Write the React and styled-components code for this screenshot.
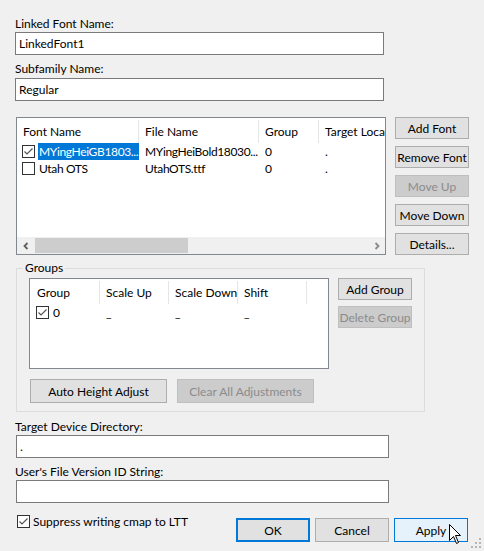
import React from "react";
import styled, { createGlobalStyle } from "styled-components";

const GlobalStyle = createGlobalStyle`
	html, body {
		margin: 0;
		padding: 0;
		background: #f0f0f0;
	}
	body {
		font-family: Lato, "Noto Sans", sans-serif;
		font-size: 12px;
		color: #000;
	}
`;

/*    **********************************************     */
const Dialog = styled.div`
	position: relative;
	box-sizing: border-box;
	width: 484px;
	height: 551px;
	padding: 16px 0 0 15px;
	background: #f0f0f0;
	overflow: hidden;
`;

const Label = styled.div`
	height: 16px;
	line-height: 16px;
	margin-top: ${(p) => p.$top || 0}px;
	white-space: nowrap;
`;

const TextBox = styled.div`
	box-sizing: border-box;
	display: flex;
	align-items: center;
	width: ${(p) => p.$w}px;
	height: 23px;
	margin-top: ${(p) => p.$top || 0}px;
	margin-left: ${(p) => p.$left || 0}px;
	padding: 0 3px;
	border: 1px solid #7a7a7a;
	background: #fff;
`;

const FontSection = styled.div`
	display: flex;
	gap: 9px;
	margin-top: 16px;
	margin-left: 1px;
`;

const ButtonColumn = styled.div`
	display: flex;
	flex-direction: column;
	gap: ${(p) => p.$gap || 7}px;
`;

const Button = styled.button`
	box-sizing: border-box;
	width: ${(p) => p.$w || 74}px;
	height: ${(p) => p.$h || 22}px;
	padding: 0;
	font-family: inherit;
	font-size: 12px;
	color: #000;
	background: #e1e1e1;
	border: 1px solid #adadad;
	border-radius: 0;
	white-space: nowrap;

	&:disabled {
		color: #8b8b8b;
		background: #cccccc;
		border-color: #bfbfbf;
	}
`;

const DefaultButton = styled(Button)`
	border: 2px solid #0078d7;
`;

const HotButton = styled(Button)`
	background: #e5f1fb;
	border-color: #0078d7;
`;

const ListView = styled.div`
	box-sizing: border-box;
	display: flex;
	flex-direction: column;
	width: ${(p) => p.$w}px;
	height: ${(p) => p.$h}px;
	border: 1px solid #828790;
	background: #fff;
	overflow: hidden;
`;

const HeaderRow = styled.div`
	display: grid;
	grid-template-columns: ${(p) => p.$cols};
	height: ${(p) => p.$h || 25}px;
	flex-shrink: 0;
`;

const HeaderCell = styled.div`
	display: flex;
	align-items: center;
	margin: 2px 0 0;
	padding-left: ${(p) => p.$pad || 6}px;
	border-right: 1px solid #e5e5e5;
	white-space: nowrap;
	overflow: hidden;

	&:last-child {
		border-right: ${(p) => (p.$edge ? "1px solid #e5e5e5" : "none")};
	}
`;

const Row = styled.div`
	display: grid;
	grid-template-columns: ${(p) => p.$cols};
	height: 17px;
	line-height: 17px;
	letter-spacing: -0.35px;
	flex-shrink: 0;
`;

const Cell = styled.div`
	display: flex;
	align-items: center;
	padding-left: ${(p) => p.$pad ?? 6}px;
	white-space: nowrap;
	overflow: hidden;
`;

const Spacer = styled.div`
	flex: 1;
`;

const Selected = styled.span`
	display: block;
	height: 17px;
	margin-left: 3px;
	padding: 0 1px;
	background: ${(p) => (p.$on ? "#0078d7" : "transparent")};
	color: ${(p) => (p.$on ? "#fff" : "#000")};
	flex: 1;
	overflow: hidden;
`;

const CheckBox = styled.span`
	box-sizing: border-box;
	display: inline-flex;
	align-items: center;
	justify-content: center;
	width: 13px;
	height: 13px;
	flex-shrink: 0;
	border: 1px solid #333;
	background: #fff;
`;

const ScrollBar = styled.div`
	display: flex;
	height: 17px;
	flex-shrink: 0;
	background: #f0f0f0;
`;

const ScrollArrow = styled.div`
	display: flex;
	align-items: center;
	justify-content: center;
	width: 17px;
`;

const ScrollTrack = styled.div`
	flex: 1;
	display: flex;
	align-items: center;
	padding-left: 1px;
`;

const ScrollThumb = styled.div`
	width: 153px;
	height: 15px;
	background: #cdcdcd;
`;

const GroupBox = styled.fieldset`
	box-sizing: border-box;
	width: 409px;
	margin: 5px 0 0 1px;
	padding: 2px 12px 8px 12px;
	border: 1px solid #dcdcdc;
	min-width: 0;
`;

const Legend = styled.legend`
	margin-left: -6px;
	padding: 0 2px;
	line-height: 16px;
`;

const GroupTop = styled.div`
	display: flex;
	gap: 9px;
`;

const GroupActions = styled.div`
	display: flex;
	gap: 10px;
	margin-top: 10px;
	margin-left: 1px;
`;

const Footer = styled.div`
	display: flex;
	align-items: flex-start;
	margin-top: 10px;
	padding-right: 16px;
`;

const CheckLabel = styled.label`
	display: flex;
	align-items: center;
	gap: 3px;
	height: 16px;
	margin-left: 2px;
`;

const DialogButtons = styled.div`
	display: flex;
	gap: 5px;
	margin-left: auto;
	margin-top: 5px;
`;

const Cursor = styled.svg`
	position: absolute;
	left: 449px;
	top: 524px;
`;

const Grip = styled.svg`
	position: absolute;
	right: 2px;
	bottom: 2px;
`;

/*      ******************************************************   */
const Check = ({ on }) => (
	<CheckBox>
		{on && (
			<svg width="11" height="11" viewBox="0 0 11 11">
				<path d="M1.5 5.5 L4 8 L9.5 2.5" fill="none" stroke="#555" strokeWidth="1.2" />
			</svg>
		)}
	</CheckBox>
);

const Chevron = ({ dir }) => (
	<svg width="8" height="8" viewBox="0 0 8 8">
		<path
			d={dir === "left" ? "M5.5 1 L2.5 4 L5.5 7" : "M2.5 1 L5.5 4 L2.5 7"}
			fill="none"
			stroke={dir === "left" ? "#606060" : "#8a8a8a"}
			strokeWidth="1.8"
		/>
	</svg>
);

const fontCols = "122px 120px 60px 1fr";
const groupCols = "70px 69px 69px 69px 1fr";

const fonts = [
	{ on: true, name: "MYingHeiGB1803...", file: "MYingHeiBold18030...", group: "0", target: "." },
	{ on: false, name: "Utah OTS", file: "UtahOTS.ttf", group: "0", target: "." },
];

const App = () => {
	return (
		<Dialog>
			<GlobalStyle />
			<Label>Linked Font Name:</Label>
			<TextBox $w={369}>LinkedFont1</TextBox>
			<Label $top={6}>Subfamily Name:</Label>
			<TextBox $w={369} $top={1}>Regular</TextBox>

			<FontSection>
				<ListView $w={370} $h={138}>
					<HeaderRow $cols={fontCols} $h={25}>
						<HeaderCell>Font Name</HeaderCell>
						<HeaderCell>File Name</HeaderCell>
						<HeaderCell>Group</HeaderCell>
						<HeaderCell>Target Location</HeaderCell>
					</HeaderRow>
					{fonts.map((f, i) => (
						<Row key={f.name} $cols={fontCols}>
							<Cell $pad={5}>
								<Check on={f.on} />
								<Selected $on={i === 0}>{f.name}</Selected>
							</Cell>
							<Cell>{f.file}</Cell>
							<Cell>{f.group}</Cell>
							<Cell>{f.target}</Cell>
						</Row>
					))}
					<Spacer />
					<ScrollBar>
						<ScrollArrow>
							<Chevron dir="left" />
						</ScrollArrow>
						<ScrollTrack>
							<ScrollThumb />
						</ScrollTrack>
						<ScrollArrow>
							<Chevron dir="right" />
						</ScrollArrow>
					</ScrollBar>
				</ListView>
				<ButtonColumn>
					<Button>Add Font</Button>
					<Button>Remove Font</Button>
					<Button disabled>Move Up</Button>
					<Button>Move Down</Button>
					<Button>Details...</Button>
				</ButtonColumn>
			</FontSection>

			<GroupBox>
				<Legend>Groups</Legend>
				<GroupTop>
					<ListView $w={300} $h={91}>
						<HeaderRow $cols={groupCols} $h={25}>
							<HeaderCell $pad={7}>Group</HeaderCell>
							<HeaderCell>Scale Up</HeaderCell>
							<HeaderCell>Scale Down</HeaderCell>
							<HeaderCell $edge>Shift</HeaderCell>
							<div />
						</HeaderRow>
						<Row $cols={groupCols}>
							<Cell $pad={6}>
								<Check on />
								<Selected>0</Selected>
							</Cell>
							<Cell>_</Cell>
							<Cell>_</Cell>
							<Cell>_</Cell>
							<div />
						</Row>
					</ListView>
					<ButtonColumn $gap={6}>
						<Button>Add Group</Button>
						<Button disabled>Delete Group</Button>
					</ButtonColumn>
				</GroupTop>
				<GroupActions>
					<Button $w={137} $h={24}>Auto Height Adjust</Button>
					<Button $w={137} $h={24} disabled>
						Clear All Adjustments
					</Button>
				</GroupActions>
			</GroupBox>

			<Label $top={7}>Target Device Directory:</Label>
			<TextBox $w={373} $left={1}>.</TextBox>
			<Label $top={6}>User's File Version ID String:</Label>
			<TextBox $w={373} $left={1} />

			<Footer>
				<CheckLabel>
					<Check on />
					Suppress writing cmap to LTT
				</CheckLabel>
				<DialogButtons>
					<DefaultButton $w={74} $h={24}>OK</DefaultButton>
					<Button $w={74} $h={24}>Cancel</Button>
					<HotButton $w={74} $h={24}>Apply</HotButton>
				</DialogButtons>
			</Footer>

			<Cursor width="13" height="21" viewBox="0 0 13 21">
				<path
					d="M0.5 0.5 L0.5 16.5 L4.5 12.5 L7.5 19.5 L9.5 18.5 L6.5 11.5 L11.5 11.5 Z"
					fill="#fff"
					stroke="#000"
					strokeWidth="1"
				/>
			</Cursor>
			<Grip width="11" height="11" viewBox="0 0 11 11">
				<rect x="8" y="0" width="2" height="2" fill="#b5b5b5" />
				<rect x="4" y="4" width="2" height="2" fill="#b5b5b5" />
				<rect x="8" y="4" width="2" height="2" fill="#b5b5b5" />
				<rect x="0" y="8" width="2" height="2" fill="#b5b5b5" />
				<rect x="4" y="8" width="2" height="2" fill="#b5b5b5" />
				<rect x="8" y="8" width="2" height="2" fill="#b5b5b5" />
			</Grip>
		</Dialog>
	);
};

export default App;
